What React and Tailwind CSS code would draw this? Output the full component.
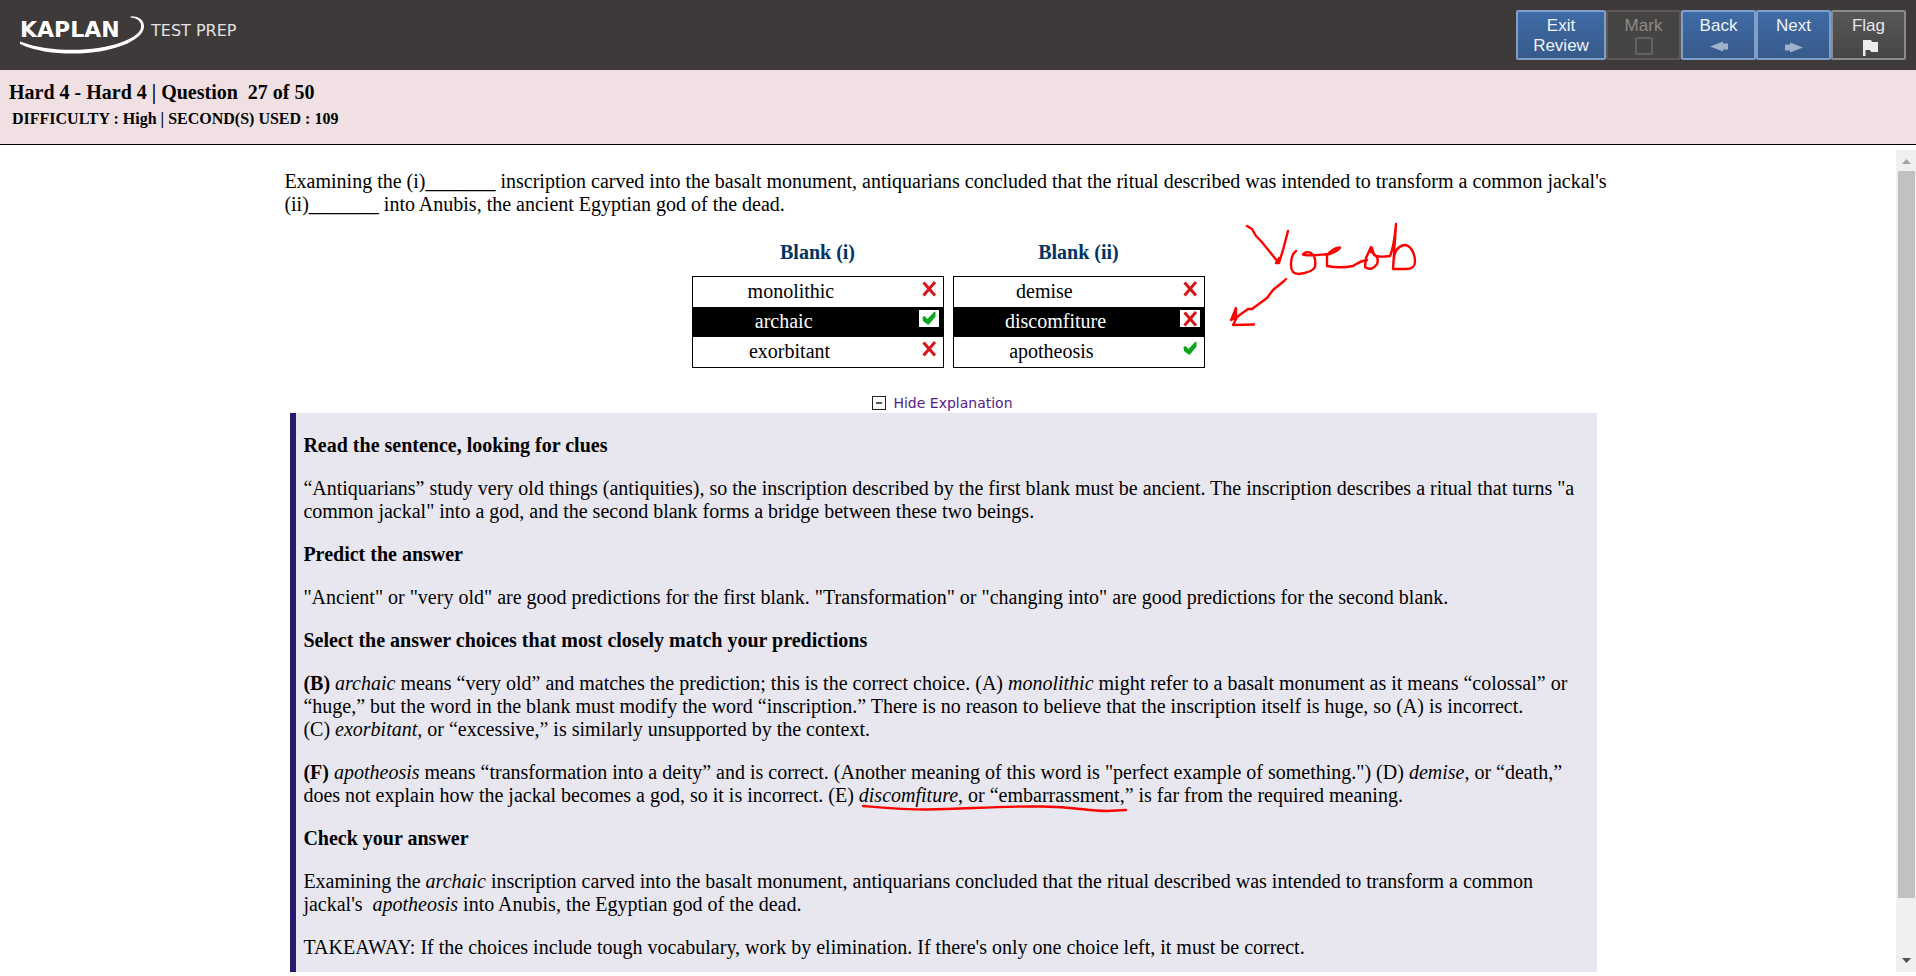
import React from "react";

const blanks = [
  {
    title: "Blank (i)",
    choices: [
      { word: "monolithic", correct: false },
      { word: "archaic", correct: true, selected: true },
      { word: "exorbitant", correct: false },
    ],
  },
  {
    title: "Blank (ii)",
    choices: [
      { word: "demise", correct: false },
      { word: "discomfiture", correct: false, selected: true },
      { word: "apotheosis", correct: true },
    ],
  },
];

function Logo() {
  return (
    <div className="flex items-start text-white">
      <div className="relative h-[42px] w-[126px] pt-[5px]">
        <span className="block font-['DejaVu_Sans',sans-serif] text-[22px] leading-[24px] font-bold">KAPLAN</span>
        <svg className="absolute inset-0" width="126" height="42" viewBox="0 0 126 42" fill="currentColor" aria-hidden="true">
          <path d="M0 28.4C16 34.500 34 36.800 53 36.800C88 36.800 119.500 26 121 14.500C121.700 8.500 117.500 5 110.500 4.500L111 3.200C119 3 124.500 7.500 124 14C123 28 91 40.600 53 40.600C33 40.600 15 38 0 31Z" />
        </svg>
      </div>
      <span className="pt-[5px] pl-[5px] font-['DejaVu_Sans',sans-serif] text-[16px] leading-[25px] text-[#e4e3e3]">TEST PREP</span>
    </div>
  );
}

const navBase =
  "flex h-[50px] flex-col items-center rounded-[2px] border-2 pt-[4px] font-['Liberation_Sans',Arial,sans-serif] text-[17px] leading-[20px]";
const navBlue = "border-[#7f9fca] bg-linear-to-b from-[#3f6ba5] to-[#375a8a] text-[#f0f3f8]";

function Toolbar() {
  return (
    <nav className="flex" aria-label="Review controls">
      <button type="button" className={`${navBase} ${navBlue} w-[90px]`}>
        <span>Exit</span>
        <span>Review</span>
      </button>
      <button type="button" disabled className={`${navBase} w-[75px] border-[#5c5a59] bg-[#464443] text-[#8d8b8a]`}>
        <span>Mark</span>
        <svg width="18" height="20" viewBox="0 0 18 20" fill="none" aria-hidden="true">
          <rect x="1" y="2" width="16" height="16" rx="1" stroke="#6f6d6c" strokeWidth="1.500" />
        </svg>
      </button>
      <button type="button" className={`${navBase} ${navBlue} w-[75px]`}>
        <span>Back</span>
        <svg width="18" height="20" viewBox="0 0 18 20" fill="#9fb1cb" aria-hidden="true">
          <path d="M0 10.500L13 5.500V7.500H18V13.500H13V15.500Z" />
        </svg>
      </button>
      <button type="button" className={`${navBase} ${navBlue} w-[75px]`}>
        <span>Next</span>
        <svg width="18" height="20" viewBox="0 0 18 20" fill="#9fb1cb" aria-hidden="true">
          <path d="M18 11.500L5 6.500V8.500H0V14.500H5V16.500Z" />
        </svg>
      </button>
      <button type="button" className={`${navBase} w-[75px] border-[#8b8a8a] bg-linear-to-b from-[#575757] to-[#464646] text-[#e6e6e6]`}>
        <span>Flag</span>
        <svg width="18" height="20" viewBox="0 0 18 20" fill="#ececec" aria-hidden="true">
          <path d="M3 4H11L12 6H18V16H11L10 14H5.500V21H3Z" />
        </svg>
      </button>
    </nav>
  );
}

function Mark({ correct }) {
  return (
    <span className="mt-[3px] mr-[4px] h-[17px] w-[20px] shrink-0 bg-white">
      <svg width="20" height="17" viewBox="0 0 20 17" fill="none" role="img" aria-label={correct ? "Correct" : "Incorrect"}>
        {correct ? (
          <path d="M3.500 7L5.500 6L8.500 9L14.500 2.500L16.500 1.500V6.500L10 14.500H8.500L4 11Z" fill="#0aa81a" />
        ) : (
          <path d="M4.500 2.500L16 15.500M16 2L4.500 15.500" stroke="#d8151a" strokeWidth="3" />
        )}
      </svg>
    </span>
  );
}

function BlankTable({ title, choices }) {
  return (
    <table className="w-[252px] border-collapse">
      <thead>
        <tr>
          <th className="pb-[12px] font-bold text-[#003366]">{title}</th>
        </tr>
      </thead>
      <tbody className="border border-black">
        {choices.map((c) => (
          <tr key={c.word} className={c.selected ? "bg-black text-white" : "bg-white"}>
            <td className="p-0">
              <div className="flex h-[30px] pl-[27px]">
                <span className="grow" />
                <span className="pt-[3px]">{c.word}</span>
                <span className="grow-3" />
                <Mark correct={c.correct} />
              </div>
            </td>
          </tr>
        ))}
      </tbody>
    </table>
  );
}

function Annotation() {
  return (
    <svg
      className="pointer-events-none absolute top-[50px] left-[916px]"
      width="260"
      height="150"
      viewBox="0 0 260 150"
      fill="none"
      stroke="#ff0000"
      strokeWidth="2.400"
      strokeLinecap="round"
      strokeLinejoin="round"
      aria-hidden="true"
    >
      <path d="M47 26L52 29L56 36L61 41L78 62L79 58L76 63H79L83 50L88 31" />
      <path d="M96 51C92 54 91 58 91 65C91 71 93 74 99 74C107 73 113 71 115 67C116 60 114 55 111 53C107 51 104 53 103 54.500C112 57 123 54 130 54C135 52 139 50 140 47.500C134 48 130 51 127 56V66C137 68 148 67 153 66C158 63 160 61 167 60" />
      <path d="M171 47L166 58L165 67C169 70 174 69 177 64C179 59 177 55 171 52L172 48L174 55C177 57 182 57 190 56C194 47 195 35 196 24L193 69H206C212 69 215 66 215 62C215 52 210 45 204 45C198 46 194 52 194 59" />
      <path d="M86 79L84 81L73 90L67 98L52 109H48L41 114L36 118L31 120L32 118L36 108V119L33 125L54 124.500M36 109L33 116L36 118" />
    </svg>
  );
}

const h = "font-bold";

function Explanation() {
  return (
    <section className="mr-[15px] ml-[6px] flex flex-col gap-[20px] border-l-6 border-[#2a1a72] bg-[#e8e7f0] py-[21px] pr-[7px] pl-[7px]">
      <h2 className={h}>Read the sentence, looking for clues</h2>
      <p>
        “Antiquarians” study very old things (antiquities), so the inscription described by the first blank must be
        ancient. The inscription describes a ritual that turns "a common jackal" into a god, and the second blank forms a
        bridge between these two beings.
      </p>
      <h2 className={h}>Predict the answer</h2>
      <p>
        "Ancient" or "very old" are good predictions for the first blank. "Transformation" or "changing into" are good
        predictions for the second blank.
      </p>
      <h2 className={h}>Select the answer choices that most closely match your predictions</h2>
      <p>
        <b>(B)</b> <i>archaic</i> means “very old” and matches the prediction; this is the correct choice. (A){" "}
        <i>monolithic</i> might refer to a basalt monument as it means “colossal” or “huge,” but the word in the blank
        must modify the word “inscription.” There is no reason to believe that the inscription itself is huge, so (A) is
        incorrect. (C)&nbsp;<i>exorbitant</i>, or “excessive,” is similarly unsupported by the context.
      </p>
      <p>
        <b>(F)</b> <i>apotheosis</i> means “transformation into a deity” and is correct. (Another meaning of this word is
        "perfect example of something.") (D) <i>demise</i>, or “death,” does not explain how the jackal becomes a god, so
        it is incorrect. (E){" "}
        <span className="relative whitespace-nowrap">
          <i>discomfiture</i>, or “embarrassment,”
          <svg
            className="pointer-events-none absolute top-[20px] left-[3px]"
            width="268"
            height="10"
            viewBox="0 0 268 10"
            fill="none"
            stroke="#ff0000"
            strokeWidth="2.400"
            strokeLinecap="round"
            aria-hidden="true"
          >
            <path d="M1 2C25 4 40 5.500 65 5.500C105 5 135 2 180 2.500C215 3 225 7 245 7L264 6" />
          </svg>
        </span>{" "}
        is far from the required meaning.
      </p>
      <h2 className={h}>Check your answer</h2>
      <p>
        Examining the <i>archaic</i> inscription carved into the basalt monument, antiquarians concluded that the ritual
        described was intended to transform a common jackal's&nbsp; <i>apotheosis</i> into Anubis, the Egyptian god of the
        dead.
      </p>
      <p>
        TAKEAWAY: If the choices include tough vocabulary, work by elimination. If there's only one choice left, it must
        be correct.
      </p>
    </section>
  );
}

function ScrollTrack() {
  return (
    <div className="flex w-[20px] shrink-0 flex-col items-center bg-[#f0f0f0]" aria-hidden="true">
      <svg className="h-[21px] w-[20px] shrink-0" viewBox="0 0 20 21" fill="#a3a3a3">
        <path d="M6 14L10.500 9L15 14Z" />
      </svg>
      <div className="w-[17px] grow-[727] bg-[#c1c1c1]" />
      <div className="grow-[53]" />
      <svg className="h-[21px] w-[20px] shrink-0" viewBox="0 0 20 21" fill="#505050">
        <path d="M6 7L10.500 12L15 7Z" />
      </svg>
    </div>
  );
}

export default function App() {
  return (
    <div className="flex h-screen flex-col bg-white font-['Liberation_Serif','Times_New_Roman',serif] text-[20px] leading-[23px] text-black">
      <header className="flex h-[70px] shrink-0 items-start justify-between bg-[#3e3a39] pt-[10px] pr-[10px] pl-[20px]">
        <div className="pt-[3px]">
          <Logo />
        </div>
        <Toolbar />
      </header>
      <div className="flex h-[75px] shrink-0 flex-col gap-[5px] border-b border-black bg-[#f0e0e3] pt-[11px] pl-[9px] font-bold">
        <h1 className="text-[20px] leading-[22px]">Hard 4 - Hard 4 | Question&nbsp; 27 of 50</h1>
        <p className="pl-[3px] text-[16px] leading-[22px]">DIFFICULTY : High | SECOND(S) USED : 109</p>
      </div>
      <div className="flex min-h-0 grow pt-[5px] pb-[4px]">
        <main className="min-w-0 grow overflow-hidden">
          <article className="relative mx-auto w-[70%] pt-[20px]">
            <p>
              Examining the (i)_______ inscription carved into the basalt monument, antiquarians concluded that the ritual
              described was intended to transform a common jackal's (ii)_______ into Anubis, the ancient Egyptian god of
              the dead.
            </p>
            <div className="mt-[25px] flex justify-center gap-[9px]">
              {blanks.map((b) => (
                <BlankTable key={b.title} title={b.title} choices={b.choices} />
              ))}
            </div>
            <div className="mt-[25px] flex justify-center pr-[11px]">
              <button type="button" className="flex h-[20px] items-center gap-[7px] text-[#551a8b]">
                <svg width="14" height="14" viewBox="0 0 14 14" fill="none" stroke="#222" aria-hidden="true">
                  <rect x="0.500" y="0.500" width="13" height="13" />
                  <path d="M4 7H10" strokeWidth="1.500" />
                </svg>
                <span className="font-['DejaVu_Sans',Verdana,sans-serif] text-[14px] leading-[20px]">Hide Explanation</span>
              </button>
            </div>
            <Explanation />
            <Annotation />
          </article>
        </main>
        <ScrollTrack />
      </div>
    </div>
  );
}
